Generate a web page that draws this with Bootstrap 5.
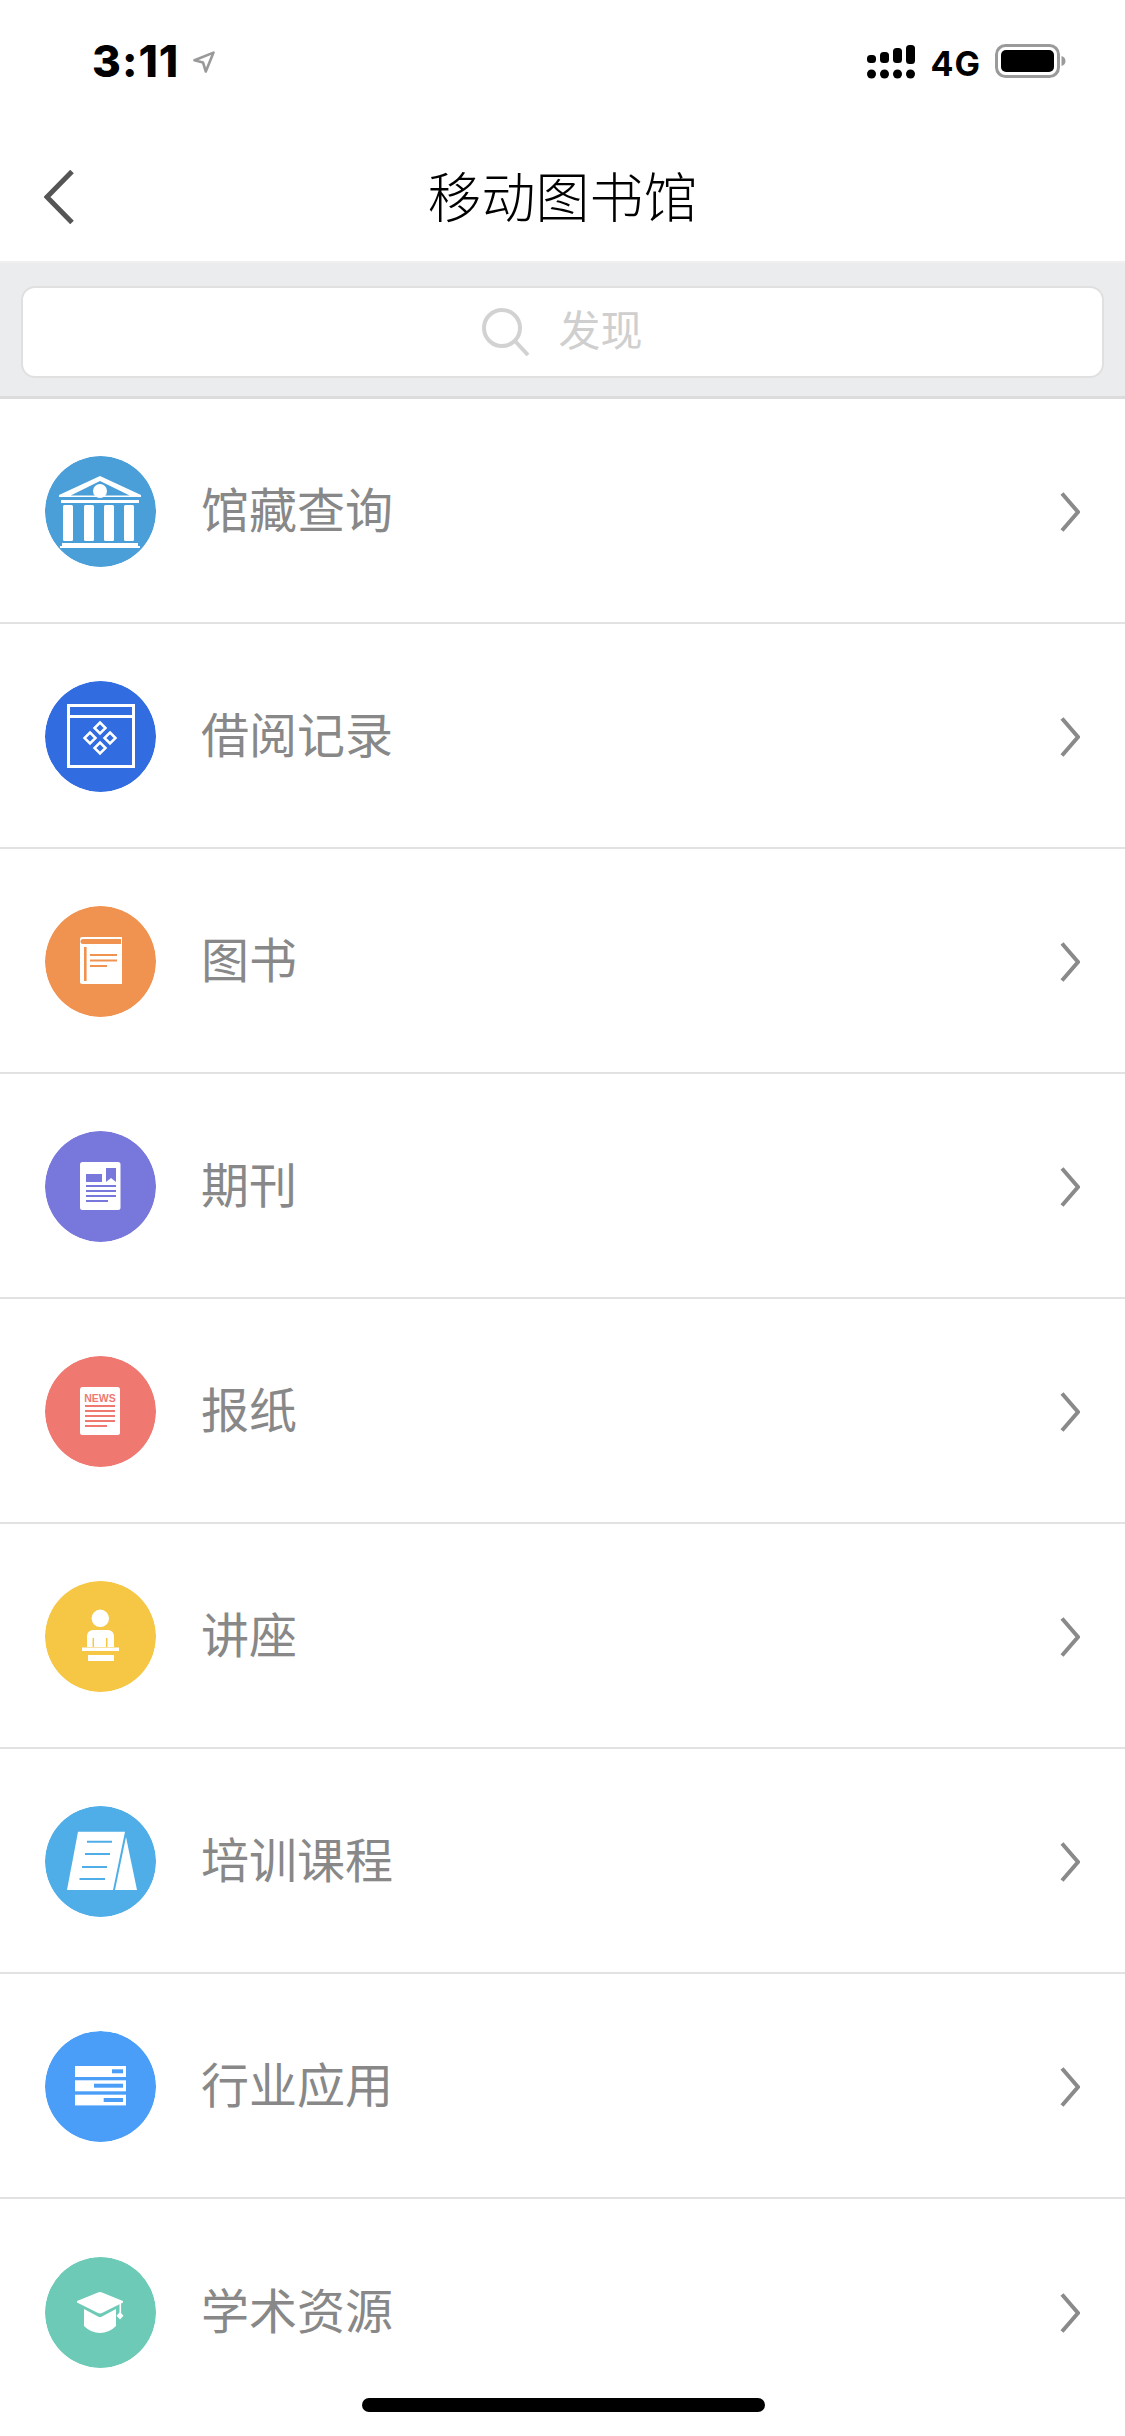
<!DOCTYPE html>
<html lang="zh-CN">
<head>
    <meta charset="UTF-8">
    <meta name="viewport" content="width=device-width, initial-scale=1.0">
    <title>移动图书馆</title>
    <link href="https://cdn.jsdelivr.net/npm/bootstrap@5.3.0/dist/css/bootstrap.min.css" rel="stylesheet">
    <style>
        body { width: 1125px; height: 2436px; overflow: hidden; background: #fff; font-family: "Liberation Sans", "Noto Sans CJK SC", sans-serif; }
        .status-bar { height: 88px; padding: 44px 59px 0 92px; align-items: flex-start; }
        .clock { font-family: Inter, sans-serif; font-size: 44px; line-height: 34px; font-weight: 800; letter-spacing: 1px; color: #000; }
        .loc-arrow { margin: 7px 0 0 -2px; }
        .net-type { font-family: Inter, sans-serif; font-size: 34px; line-height: 34px; font-weight: 700; letter-spacing: 1px; margin: 3px 14px 0 15px; color: #000; }
        .title-bar { height: 175px; padding: 44px 44px 0; border-bottom: 2px solid #f0f0f0; }
        .title-side { width: 30px; flex: none; }
        .page-title { font-size: 54px; font-weight: 300; line-height: 60px; color: #000; margin: 4px 0 0; }
        .search-band { height: 136px; padding: 23px 21px 0; background: #ebecee; border-bottom: 3px solid #dcdcdc; }
        .search-box { height: 92px; background: #fff; border: 2px solid #e0e0e0; border-radius: 14px; gap: 28px; }
        .search-text { font-size: 42px; color: #cfcfcf; line-height: 50px; }
        .menu-row.list-group-item { height: 225px; padding: 2px 45px 0 45px; border-width: 0 0 2px; border-color: #e2e2e2; gap: 45px; }
        .round-icon { width: 111px; height: 111px; border-radius: 50%; flex: none; display: block; }
        .menu-label { font-size: 48px; color: #888; line-height: 60px; flex-grow: 1; }
        .home-bar { position: absolute; left: 362px; top: 2398px; width: 403px; height: 14px; border-radius: 7px; background: #000; }
    </style>
</head>
<body>

<div class="status-bar d-flex justify-content-between">
    <div class="d-flex align-items-start gap-3">
        <span class="clock">3:11</span>
        <svg width="22" height="22" viewBox="0 0 22 22" class="loc-arrow" fill="none" stroke="#999" stroke-width="2.6" stroke-linejoin="round"><path d="M1.5 9.3 20.5 1.6 12.8 20.5 10 11.4Z"/></svg>
    </div>
    <div class="d-flex align-items-start">
        <svg width="48" height="35" viewBox="0 0 48 35" fill="#000">
            <rect x="0" y="11" width="9" height="8" rx="3.5"/><rect x="13" y="8" width="9" height="11" rx="3.5"/><rect x="26" y="4" width="9" height="15" rx="3.5"/><rect x="39" y="1" width="9" height="19" rx="3.5"/>
            <circle cx="4.5" cy="30" r="4.5"/><circle cx="17.5" cy="30" r="4.5"/><circle cx="30.5" cy="30" r="4.5"/><circle cx="43.5" cy="30" r="4.5"/>
        </svg>
        <span class="net-type">4G</span>
        <svg width="71" height="34" viewBox="0 0 71 34">
            <rect x="1.5" y="1.5" width="62" height="31" rx="9" fill="none" stroke="#9a9a9a" stroke-width="3"/>
            <rect x="6" y="6" width="53" height="22" rx="5" fill="#000"/>
            <path d="M66.5 12c2.5.8 4 2.500 4 5s-1.500 4.200-4 5Z" fill="#9a9a9a"/>
        </svg>
    </div>
</div>

<div class="title-bar d-flex align-items-center justify-content-between">
    <svg class="title-side" width="30" height="54" viewBox="0 0 30 54" fill="none" stroke="#555" stroke-width="5"><path d="M28 1.500 3 27l25 25.500"/></svg>
    <h1 class="page-title">移动图书馆</h1>
    <span class="title-side"></span>
</div>

<div class="search-band">
    <div class="search-box d-flex align-items-center justify-content-center">
        <svg width="48" height="48" viewBox="0 0 48 48" fill="none" stroke="#d2d2d2" stroke-width="4"><circle cx="20" cy="20" r="18"/><path d="M33 33l13 14"/></svg>
        <span class="search-text">发现</span>
    </div>
</div>

<div class="list-group list-group-flush rounded-0">

    <a href="#" class="menu-row list-group-item d-flex align-items-center">
        <svg class="round-icon" viewBox="0 0 111 111">
            <circle cx="55.500" cy="55.500" r="55.500" fill="#4a9fd8"/>
            <path d="M55 20 14 39v2h82v-2Z" fill="#fff"/>
            <path d="M55 25 25.700 39.500h59Z" fill="#4a9fd8"/>
            <circle cx="55" cy="35" r="7" fill="#fff"/>
            <g fill="#fff">
                <rect x="16" y="44" width="78" height="3"/>
                <rect x="18" y="49" width="10" height="36" rx="1.500"/><rect x="39" y="49" width="10" height="36" rx="1.500"/><rect x="59" y="49" width="10" height="36" rx="1.500"/><rect x="79" y="49" width="10" height="36" rx="1.500"/>
                <path d="M17 87h76v3h2v2H15v-2h2Z"/>
            </g>
        </svg>
        <span class="menu-label">馆藏查询</span>
        <svg width="20" height="40" viewBox="0 0 20 40" fill="none" stroke="#8a8a8a" stroke-width="4"><path d="M2 1.500 18 20 2 38.500"/></svg>
    </a>

    <a href="#" class="menu-row list-group-item d-flex align-items-center">
        <svg class="round-icon" viewBox="0 0 111 111">
            <circle cx="55.500" cy="55.500" r="55.500" fill="#316de0"/>
            <g fill="none" stroke="#fff">
                <rect x="23.500" y="24.500" width="65" height="61" stroke-width="3"/>
                <path d="M23 35.500h66" stroke-width="3"/>
                <g stroke-width="2.500"><path d="M55 41.500 60.500 47 55 52.500 49.500 47Z"/><path d="M45 51.500 50.500 57 45 62.500 39.500 57Z"/><path d="M65 51.500 70.500 57 65 62.500 59.500 57Z"/><path d="M55 61.500 60.500 67 55 72.500 49.500 67Z"/></g>
            </g>
        </svg>
        <span class="menu-label">借阅记录</span>
        <svg width="20" height="40" viewBox="0 0 20 40" fill="none" stroke="#8a8a8a" stroke-width="4"><path d="M2 1.500 18 20 2 38.500"/></svg>
    </a>

    <a href="#" class="menu-row list-group-item d-flex align-items-center">
        <svg class="round-icon" viewBox="0 0 111 111">
            <circle cx="55.500" cy="55.500" r="55.500" fill="#f09350"/>
            <path d="M37 31h40v47H37a2 2 0 0 1-2-2V33a2 2 0 0 1 2-2Z" fill="#fff"/>
            <path d="M38 33h38v5H38a2.500 2.500 0 0 1 0-5Z" fill="#f09350"/>
            <g fill="#f09350"><rect x="39" y="41" width="2.600" height="34"/><rect x="45" y="48" width="27" height="2"/><rect x="45" y="53.500" width="27" height="2"/><rect x="45" y="59" width="17" height="2"/></g>
        </svg>
        <span class="menu-label">图书</span>
        <svg width="20" height="40" viewBox="0 0 20 40" fill="none" stroke="#8a8a8a" stroke-width="4"><path d="M2 1.500 18 20 2 38.500"/></svg>
    </a>

    <a href="#" class="menu-row list-group-item d-flex align-items-center">
        <svg class="round-icon" viewBox="0 0 111 111">
            <circle cx="55.500" cy="55.500" r="55.500" fill="#7878dc"/>
            <rect x="35" y="31" width="40.500" height="48" rx="2.500" fill="#fff"/>
            <g fill="#7878dc"><rect x="41" y="43" width="16" height="8"/><path d="M61 37h10v14l-5-4-5 4Z"/><rect x="41" y="54" width="30" height="2"/><rect x="41" y="59" width="30" height="2"/><rect x="41" y="64" width="30" height="2"/><rect x="41" y="69" width="22" height="2"/></g>
        </svg>
        <span class="menu-label">期刊</span>
        <svg width="20" height="40" viewBox="0 0 20 40" fill="none" stroke="#8a8a8a" stroke-width="4"><path d="M2 1.500 18 20 2 38.500"/></svg>
    </a>

    <a href="#" class="menu-row list-group-item d-flex align-items-center">
        <svg class="round-icon" viewBox="0 0 111 111">
            <circle cx="55.500" cy="55.500" r="55.500" fill="#ef7970"/>
            <rect x="35" y="31" width="40" height="48" rx="2.500" fill="#fff"/>
            <text x="55" y="45.500" text-anchor="middle" font-family="Liberation Sans" font-size="10.500" font-weight="700" fill="#ef7970">NEWS</text>
            <g fill="#ef7970"><rect x="40" y="49" width="30" height="2"/><rect x="40" y="54" width="30" height="2"/><rect x="40" y="59" width="30" height="2"/><rect x="40" y="64" width="30" height="2"/><rect x="40" y="69" width="22" height="2"/></g>
        </svg>
        <span class="menu-label">报纸</span>
        <svg width="20" height="40" viewBox="0 0 20 40" fill="none" stroke="#8a8a8a" stroke-width="4"><path d="M2 1.500 18 20 2 38.500"/></svg>
    </a>

    <a href="#" class="menu-row list-group-item d-flex align-items-center">
        <svg class="round-icon" viewBox="0 0 111 111">
            <circle cx="55.500" cy="55.500" r="55.500" fill="#f5c745"/>
            <g fill="#fff"><circle cx="55.300" cy="37.300" r="8.700"/><path d="M42 66V55a6 6 0 0 1 6-6h15a6 6 0 0 1 6 6v11Z"/><rect x="37" y="66.500" width="37" height="3.500"/><rect x="43" y="74" width="26" height="6"/></g>
            <path d="M48.300 57v9M61.700 57v9" stroke="#f5c745" stroke-width="1.500"/>
        </svg>
        <span class="menu-label">讲座</span>
        <svg width="20" height="40" viewBox="0 0 20 40" fill="none" stroke="#8a8a8a" stroke-width="4"><path d="M2 1.500 18 20 2 38.500"/></svg>
    </a>

    <a href="#" class="menu-row list-group-item d-flex align-items-center">
        <svg class="round-icon" viewBox="0 0 111 111">
            <circle cx="55.500" cy="55.500" r="55.500" fill="#4fade8"/>
            <path d="M33 25.700h47L68 84H22Z" fill="#fff"/>
            <path d="M81 31 92 84H70Z" fill="#fff"/>
            <path d="M42 35.700h25M40 48h25M37 61h25M34.500 73H60" stroke="#4fade8" stroke-width="2"/>
        </svg>
        <span class="menu-label">培训课程</span>
        <svg width="20" height="40" viewBox="0 0 20 40" fill="none" stroke="#8a8a8a" stroke-width="4"><path d="M2 1.500 18 20 2 38.500"/></svg>
    </a>

    <a href="#" class="menu-row list-group-item d-flex align-items-center">
        <svg class="round-icon" viewBox="0 0 111 111">
            <circle cx="55.500" cy="55.500" r="55.500" fill="#4a9ef8"/>
            <g fill="#fff"><rect x="30" y="35" width="51" height="11"/><rect x="30" y="49.300" width="51" height="11"/><rect x="30" y="63.700" width="51" height="10.700"/></g>
            <g fill="#4a9ef8"><rect x="67" y="38.300" width="11" height="4"/><rect x="49" y="52.700" width="29" height="4"/><rect x="58.700" y="67" width="19.300" height="4"/></g>
        </svg>
        <span class="menu-label">行业应用</span>
        <svg width="20" height="40" viewBox="0 0 20 40" fill="none" stroke="#8a8a8a" stroke-width="4"><path d="M2 1.500 18 20 2 38.500"/></svg>
    </a>

    <a href="#" class="menu-row list-group-item d-flex align-items-center">
        <svg class="round-icon" viewBox="0 0 111 111">
            <circle cx="55.500" cy="55.500" r="55.500" fill="#6ccab6"/>
            <g fill="#fff">
                <path d="M53 35.500q2-.8 4 0L78 44v1.500L57 56q-2 .8-4 0L32 45.500V44Z"/>
                <path d="M39 52l14 7.500q2 1 4 0L71 52v17q-7 7-16 7t-16-7Z"/>
                <rect x="74.500" y="45" width="1.600" height="12"/>
                <path d="M75 55l3.500 3.700L75 62.500l-3.500-3.800Z"/>
            </g>
        </svg>
        <span class="menu-label">学术资源</span>
        <svg width="20" height="40" viewBox="0 0 20 40" fill="none" stroke="#8a8a8a" stroke-width="4"><path d="M2 1.500 18 20 2 38.500"/></svg>
    </a>

</div>

<div class="home-bar"></div>

<script src="https://cdn.jsdelivr.net/npm/bootstrap@5.3.0/dist/js/bootstrap.bundle.min.js"></script>
</body>
</html>
